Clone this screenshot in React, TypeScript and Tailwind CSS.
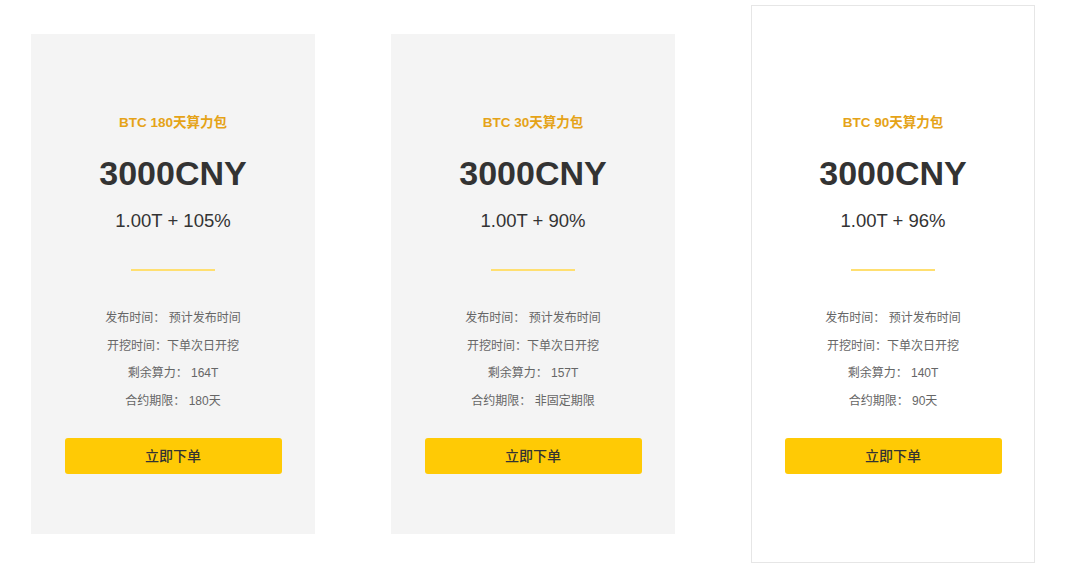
import React from 'react';

interface Plan {
  title: string;
  rate: string;
  rest: string;
  term: string;
  active?: boolean;
}

const PLANS: Plan[] = [
  { title: 'BTC 180天算力包', rate: '1.00T + 105%', rest: '164T', term: '180天' },
  { title: 'BTC 30天算力包', rate: '1.00T + 90%', rest: '157T', term: '非固定期限' },
  { title: 'BTC 90天算力包', rate: '1.00T + 96%', rest: '140T', term: '90天', active: true },
];

const FONT = "font-['Liberation_Sans','Noto_Sans_CJK_SC',sans-serif]";

const PlanCard: React.FC<{ plan: Plan }> = ({ plan }) => {
  return (
    <div
      className={`
        flex flex-col items-center shrink-0
        ${plan.active
          ? 'w-[284px] h-[558px] pt-[107px] bg-white border border-[#e6e6e6]'
          : 'w-[284px] h-[500px] pt-[79px] bg-[#f4f4f4]'}
      `}
    >
      <div className="text-[13.5px] leading-[20px] font-bold text-[#e5a317]">{plan.title}</div>
      <div className="mt-[20px] text-[34px] leading-[40px] font-bold text-[#333333]">3000CNY</div>
      <div className="mt-[15px] text-[18.5px] leading-[26px] text-[#333333]">{plan.rate}</div>

      {/* divider */}
      <div className="mt-[35px] w-[84px] h-[2px] bg-[#ffdf70]" />

      <div className="mt-[34px] flex flex-col items-center text-[12px] leading-[27.5px] text-[#666666]">
        <div>发布时间：&nbsp;预计发布时间</div>
        <div>开挖时间：下单次日开挖</div>
        <div>剩余算力：&nbsp;{plan.rest}</div>
        <div>合约期限：&nbsp;{plan.term}</div>
      </div>

      <button className="mt-[23px] w-[217px] h-[36px] rounded-[3px] bg-[#ffca05] text-[14px] font-medium text-[#333333]">
        立即下单
      </button>
    </div>
  );
};

const App: React.FC = () => {
  return (
    <div className={`w-[1080px] h-[588px] bg-white ${FONT}`}>
      <div className="flex items-center h-[558px] mt-[5px] pl-[31px] gap-[76px]">
        {PLANS.map((plan) => (
          <PlanCard key={plan.title} plan={plan} />
        ))}
      </div>
    </div>
  );
};

export default App;
